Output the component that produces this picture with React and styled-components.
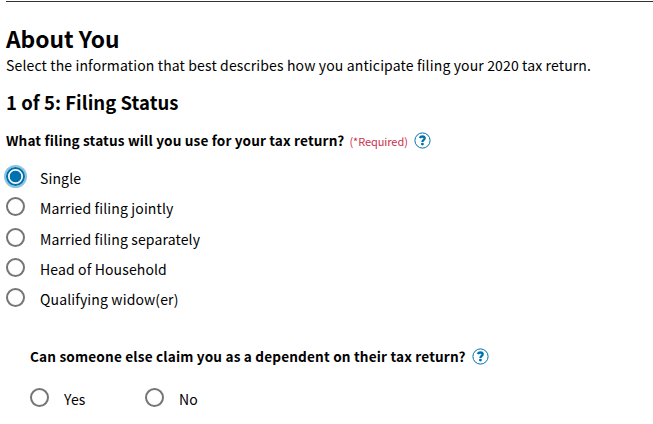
import React, { useState } from 'react';
import styled, { createGlobalStyle } from 'styled-components';

const statuses = [
  'Single',
  'Married filing jointly',
  'Married filing separately',
  'Head of Household',
  'Qualifying widow(er)',
];

const HelpIcon = () => (
  <HelpSvg viewBox="0 0 17 17" aria-label="Help">
    <circle cx="8.5" cy="8.5" r="7.6" fill="#fff" stroke="#0071af" strokeWidth="1" />
    <path
      d="M5.8 6 C6.3 4.9 7.2 4.5 8.4 4.5 C9.9 4.5 10.7 5.2 10.7 6.3 C10.7 7.9 8.4 8 8.4 10"
      fill="none"
      stroke="#0071af"
      strokeWidth="2.3"
    />
    <circle cx="8.4" cy="12.1" r="1.45" fill="#0071af" />
  </HelpSvg>
);

const RadioOption = ({ name, label, checked, onChange }) => (
  <Option>
    <Radio type="radio" name={name} checked={checked} onChange={onChange} />
    <OptionText>{label}</OptionText>
  </Option>
);

export default function App() {
  const [status, setStatus] = useState('Single');
  const [dependent, setDependent] = useState('');

  return (
    <>
      <GlobalStyle />
      <Container>
        <Divider />
        <Title>About You</Title>
        <Description>
          Select the information that best describes how you anticipate filing your 2020 tax return.
        </Description>
        <StepTitle>1 of 5: Filing Status</StepTitle>
        <QuestionRow>
          <Question $spacing="0.15px">What filing status will you use for your tax return?</Question>
          <Required>(*Required)</Required>
          <HelpIcon />
        </QuestionRow>
        <StatusList>
          {statuses.map((item) => (
            <RadioOption
              key={item}
              name="status"
              label={item}
              checked={status === item}
              onChange={() => setStatus(item)}
            />
          ))}
        </StatusList>
        <SubSection>
          <QuestionRow>
            <Question $spacing="0.17px">
              Can someone else claim you as a dependent on their tax return?
            </Question>
            <HelpIcon />
          </QuestionRow>
          <AnswerRow>
            {['Yes', 'No'].map((item) => (
              <RadioOption
                key={item}
                name="dependent"
                label={item}
                checked={dependent === item}
                onChange={() => setDependent(item)}
              />
            ))}
          </AnswerRow>
        </SubSection>
      </Container>
    </>
  );
}

const GlobalStyle = createGlobalStyle`
  * {
    box-sizing: border-box;
  }
  body {
    margin: 0;
    background: #fff;
    color: #000;
    font-family: "Noto Sans CJK SC", "Noto Sans", sans-serif;
    overflow: hidden;
  }
`;

const Container = styled.main`
  padding: 1px 0 0 6px;
`;

const Divider = styled.hr`
  height: 1px;
  margin: 0 0 21px;
  border: 0;
  background: #323232;
`;

const Title = styled.h1`
  margin: 0;
  font-size: 22.8px;
  font-weight: 700;
  line-height: 32px;
`;

const Description = styled.p`
  margin: 0;
  font-size: 14px;
  line-height: 20px;
  letter-spacing: 0.14px;
  white-space: nowrap;
`;

const StepTitle = styled.h2`
  margin: 14px 0 0;
  font-size: 18.5px;
  font-weight: 700;
  line-height: 26px;
  letter-spacing: 0.05px;
`;

const QuestionRow = styled.div`
  display: flex;
  align-items: center;
  height: 20px;
  margin-top: 15px;
  white-space: nowrap;
`;

const Question = styled.span`
  font-size: 13.6px;
  font-weight: 700;
  line-height: 20px;
  letter-spacing: ${(props) => props.$spacing};
`;

const Required = styled.span`
  margin-left: 5px;
  padding-top: 2px;
  color: #c9304b;
  font-size: 11px;
  line-height: 20px;
  letter-spacing: -0.07px;
`;

const HelpSvg = styled.svg`
  flex: none;
  width: 17px;
  height: 17px;
  margin-left: 6px;
`;

const StatusList = styled.div`
  display: flex;
  flex-direction: column;
  margin-top: 12px;
`;

const Option = styled.label`
  display: flex;
  align-items: flex-start;
  height: 30.25px;
  padding-top: 5px;
`;

const Radio = styled.input`
  appearance: none;
  flex: none;
  width: 19px;
  height: 19px;
  margin: 0;
  border: 2px solid #757575;
  border-radius: 50%;
  background: #fff;

  &:checked {
    border-color: #0071af;
    background: radial-gradient(circle, #0071af 5.4px, #fff 6.2px);
    box-shadow: 0 0 0 2px #8fc3e0;
  }
`;

const OptionText = styled.span`
  margin: 1px 0 0 15px;
  font-size: 14px;
  line-height: 20px;
  letter-spacing: 0.13px;
`;

const SubSection = styled.div`
  margin: 33px 0 0 24px;
`;

const AnswerRow = styled.div`
  display: grid;
  grid-template-columns: 115px 115px;
  margin-top: 17px;
`;
